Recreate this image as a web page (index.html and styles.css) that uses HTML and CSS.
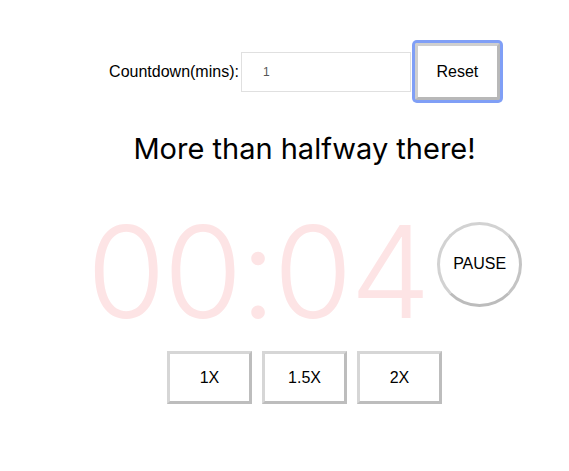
FILE: index.html
```html
<!DOCTYPE html>
<html>
<head>
<meta charset="utf-8">
<link rel="stylesheet" href="styles.css">
</head>
<body>
<div class="app">
  <div class="controls">
    <label class="label" for="mins">Countdown(mins):</label>
    <input class="mins" id="mins" type="text" value="1">
    <button class="reset">Reset</button>
  </div>
  <h1 class="message">More than halfway there!</h1>
  <div class="timer-row">
    <div class="time">00:04</div>
    <button class="pause">PAUSE</button>
  </div>
  <div class="speeds">
    <button class="speed">1X</button>
    <button class="speed">1.5X</button>
    <button class="speed">2X</button>
  </div>
</div>
</body>
</html>
```
FILE: styles.css
```css
html, body {
  margin: 0;
  background: #fff;
}
body {
  font-family: "Liberation Sans", Arial, sans-serif;
  color: #000;
}
.app {
  display: flex;
  flex-direction: column;
  align-items: center;
  padding-left: 40px;
}
.controls {
  display: flex;
  align-items: center;
  margin-top: 43px;
}
.label {
  font-size: 16px;
  margin-right: 2px;
}
.mins {
  box-sizing: border-box;
  width: 170px;
  height: 40px;
  border: 1px solid #e0e0e0;
  padding: 0 21px;
  font-family: "Liberation Sans", Arial, sans-serif;
  font-size: 12px;
  color: #555;
  outline: none;
}
.reset {
  box-sizing: border-box;
  width: 85px;
  height: 57px;
  margin-left: 4px;
  background: #fff;
  border: 3px solid #cfcfcf;
  border-right-color: #b8b8b8;
  border-bottom-color: #b8b8b8;
  border-radius: 2px;
  box-shadow: 0 0 0 3px #809ff6;
  font-family: "Liberation Sans", Arial, sans-serif;
  font-size: 16px;
  color: #000;
}
.message {
  margin: 31px 0 0;
  font-family: Inter, "Liberation Sans", sans-serif;
  font-size: 29px;
  font-weight: normal;
  line-height: 36px;
}
.timer-row {
  display: flex;
  align-items: center;
  margin-top: 40px;
}
.time {
  font-family: Inter, "Liberation Sans", sans-serif;
  font-weight: 300;
  font-size: 128px;
  line-height: 130px;
  letter-spacing: -2.5px;
  color: #fde4e5;
}
.pause {
  box-sizing: border-box;
  width: 85px;
  height: 85px;
  margin-left: 9px;
  margin-bottom: 16px;
  border-radius: 50%;
  background: #fff;
  border: 3px solid #d2d2d2;
  border-bottom-color: #bcbcbc;
  border-right-color: #c4c4c4;
  font-family: "Liberation Sans", Arial, sans-serif;
  font-size: 16px;
  color: #000;
  padding: 0;
}
.speeds {
  display: flex;
  gap: 10px;
  margin-top: 14px;
}
.speed {
  box-sizing: border-box;
  width: 85px;
  height: 53px;
  background: #fff;
  border: 3px solid #d6d6d6;
  border-right-color: #bdbdbd;
  border-bottom-color: #bdbdbd;
  font-family: "Liberation Sans", Arial, sans-serif;
  font-size: 16px;
  color: #000;
  padding: 0;
}
```
